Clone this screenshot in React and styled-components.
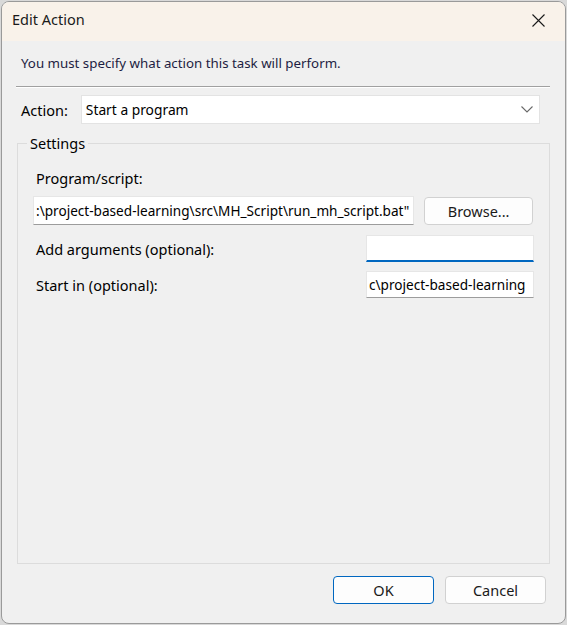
import React from 'react';
import styled, { createGlobalStyle } from 'styled-components';

const GlobalStyle = createGlobalStyle`
  html, body {
    margin: 0;
    padding: 0;
    background: #d9d9d9;
  }
  body {
    font-family: "Noto Sans", "Open Sans", sans-serif;
    color: #000;
  }
`;

const Page = styled.div`
  width: 567px;
  height: 625px;
  box-sizing: border-box;
  padding: 1px 1px 1px 1px;
  display: flex;
`;

const Window = styled.div`
  flex: 1;
  display: flex;
  flex-direction: column;
  border: 1px solid #9a9a9a;
  border-radius: 8px;
  overflow: hidden;
  background: #f0f0f0;
`;

const TitleBar = styled.div`
  height: 39px;
  flex: none;
  display: flex;
  align-items: center;
  justify-content: space-between;
  background: #f9f2ea;
  padding: 0 0 0 10px;
`;

const Title = styled.span`
  font-size: 14.5px;
  color: #1a1a1a;
  margin-top: -5px;
`;

const CloseButton = styled.div`
  width: 46px;
  height: 39px;
  display: flex;
  align-items: center;
  justify-content: center;
  margin: -2px 4px 0 0;
`;

const Body = styled.div`
  flex: 1;
  display: flex;
  flex-direction: column;
  padding: 0 15px 19px 14px;
`;

const Instruction = styled.div`
  margin: 12px 0 0 5px;
  font-size: 13.3px;
  line-height: 20px;
  color: #1d1d42;
`;

const Separator = styled.div`
  margin-top: 13px;
  height: 1px;
  background: #a0a0a0;
  border-bottom: 1px solid #ffffff;
`;

const ActionRow = styled.div`
  margin: 7px 10px 0 5px;
  display: flex;
  align-items: center;
  gap: 13px;
`;

const Label = styled.span`
  font-size: 14.5px;
  line-height: 20px;
  padding-left: ${(p) => p.$indent || 0}px;
`;

const Select = styled.div`
  flex: 1;
  height: 29px;
  box-sizing: border-box;
  background: #ffffff;
  border: 1px solid #e3e3e3;
  display: flex;
  align-items: center;
  justify-content: space-between;
  padding: 0 6px 0 4px;
  font-size: 13.8px;
`;

const Group = styled.fieldset`
  flex: 1;
  margin: 9px 0 0 1px;
  padding: 0 16px 0 15px;
  border: 1px solid #dcdcdc;
  display: flex;
  flex-direction: column;
  min-width: 0;
`;

const Legend = styled.legend`
  margin-left: -6px;
  padding: 0 3px;
  font-size: 14.5px;
  line-height: 20px;
`;

const ProgramLabel = styled(Label)`
  display: block;
  margin-top: 15px;
`;

const ProgramRow = styled.div`
  margin-top: 8px;
  display: flex;
  align-items: center;
  gap: 10px;
`;

const Field = styled.div`
  box-sizing: border-box;
  width: ${(p) => p.$width}px;
  height: ${(p) => p.$height}px;
  background: #ffffff;
  border: 1px solid #e6e6e6;
  border-bottom: ${(p) => (p.$focused ? '2px solid #0067c0' : '1px solid #9c9c9c')};
  padding: 0 2px;
  display: flex;
  align-items: center;
  overflow: hidden;
  white-space: nowrap;
  font-size: 13.6px;
`;

const OptionRow = styled.div`
  margin-top: ${(p) => p.$gap}px;
  margin-right: -1px;
  display: flex;
  align-items: center;
  justify-content: space-between;
`;

const Button = styled.div`
  box-sizing: border-box;
  width: ${(p) => p.$width}px;
  height: 28px;
  background: #fdfdfd;
  border: 1px solid ${(p) => (p.$primary ? '#0067c0' : '#d1d1d1')};
  border-radius: 4px;
  display: flex;
  align-items: center;
  justify-content: center;
  font-size: 14.5px;
  color: #1a1a1a;
`;

const Footer = styled.div`
  margin-top: 12px;
  margin-right: 4px;
  display: flex;
  justify-content: flex-end;
  gap: 11px;
`;

const CloseIcon = () => (
  <svg width="13" height="13" viewBox="0 0 13 13">
    <path d="M0.5 0.5 L12.5 12.5 M12.5 0.5 L0.5 12.5" stroke="#1a1a1a" strokeWidth="1.1" fill="none" />
  </svg>
);

const Chevron = () => (
  <svg width="12" height="7" viewBox="0 0 12 7">
    <path d="M0.5 0.5 L6 6 L11.5 0.5" stroke="#6a6a6a" strokeWidth="1.1" fill="none" />
  </svg>
);

const App = () => (
  <>
    <GlobalStyle />
    <Page>
      <Window>
        <TitleBar>
          <Title>Edit Action</Title>
          <CloseButton>
            <CloseIcon />
          </CloseButton>
        </TitleBar>
        <Body>
          <Instruction>You must specify what action this task will perform.</Instruction>
          <Separator />
          <ActionRow>
            <Label>Action:</Label>
            <Select>
              <span>Start a program</span>
              <Chevron />
            </Select>
          </ActionRow>
          <Group>
            <Legend>Settings</Legend>
            <ProgramLabel $indent={3}>Program/script:</ProgramLabel>
            <ProgramRow>
              <Field $width={382} $height={29}>
                :\project-based-learning\src\MH_Script\run_mh_script.bat"
              </Field>
              <Button $width={109}>Browse...</Button>
            </ProgramRow>
            <OptionRow $gap={10}>
              <Label $indent={3}>Add arguments (optional):</Label>
              <Field $width={168} $height={27} $focused />
            </OptionRow>
            <OptionRow $gap={9}>
              <Label $indent={3}>Start in (optional):</Label>
              <Field $width={168} $height={27}>
                c\project-based-learning
              </Field>
            </OptionRow>
          </Group>
          <Footer>
            <Button $width={101} $primary>
              OK
            </Button>
            <Button $width={101}>Cancel</Button>
          </Footer>
        </Body>
      </Window>
    </Page>
  </>
);

export default App;
